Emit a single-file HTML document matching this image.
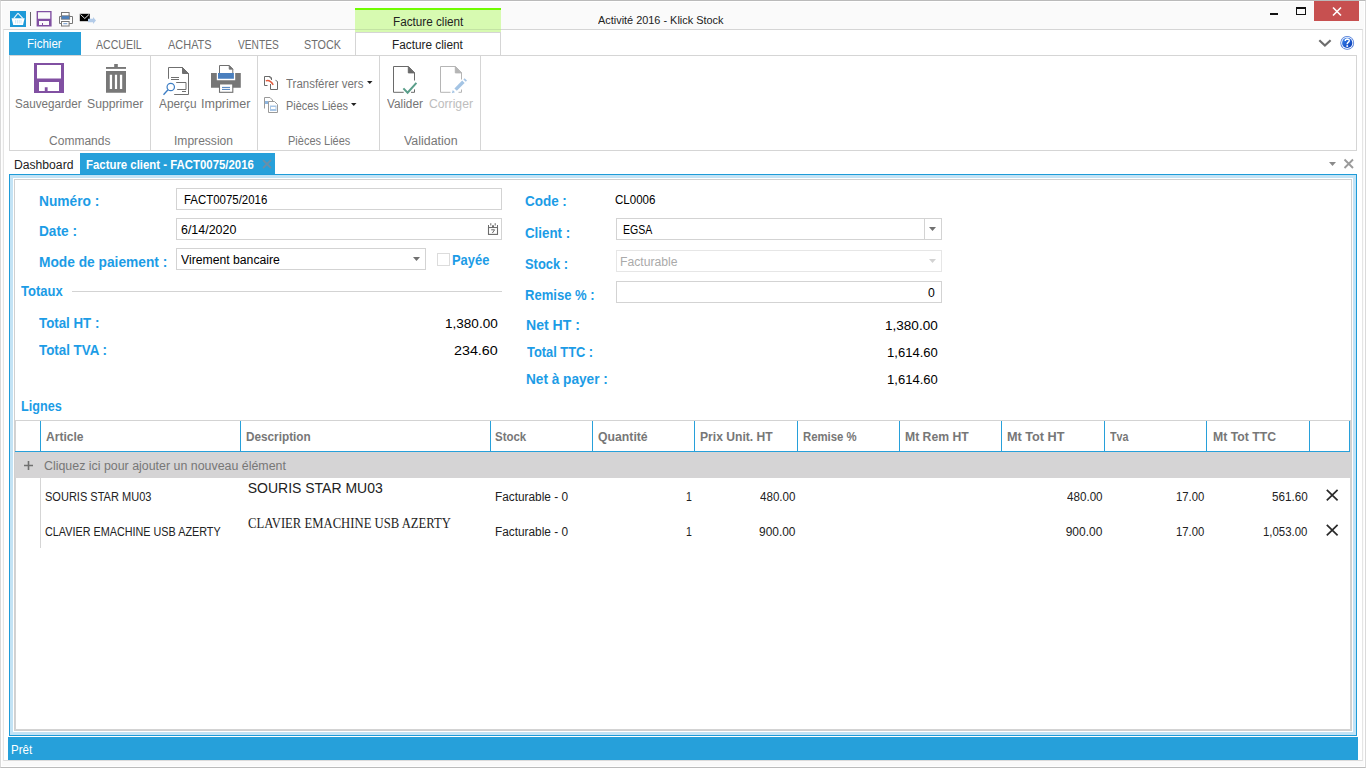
<!DOCTYPE html>
<html><head><meta charset="utf-8"><title>Klick Stock</title>
<style>
html,body{margin:0;padding:0;}
body{width:1366px;height:768px;position:relative;overflow:hidden;background:#fafafa;font-family:'Liberation Sans', sans-serif;}
.t{position:absolute;z-index:5;line-height:1;white-space:nowrap;transform-origin:0 0;}
.a{position:absolute;box-sizing:border-box;}
svg{position:absolute;overflow:visible;}
</style></head><body>
<!-- window frame -->
<div class="a" style="left:0;top:0;width:1366px;height:768px;border:1px solid #dadada;border-top-color:#bababa;border-bottom-color:#bbbbbb;"></div>
<div class="a" style="left:1px;top:1px;width:1364px;height:766px;border:1px solid #fff;"></div>
<div class="a" style="left:3px;top:29px;width:1360px;height:732px;border:1px solid #e5e5e5;border-top-color:#d5d5d5;border-bottom-color:#dcdcdc;background:#fff;"></div>
<!-- contextual header -->
<div class="a" style="left:355px;top:8px;width:146px;height:24px;background:#d7fab1;border-top:2px solid #70fb00;"></div>
<div class="a" style="left:355px;top:29px;width:146px;height:1px;background:#c3e3a3;"></div>
<!-- window buttons -->
<div class="a" style="left:1314px;top:1px;width:45px;height:20px;background:#c75050;"></div>
<svg style="left:1332px;top:7px" width="10" height="9"><path d="M1 0.5 L9 8.5 M9 0.5 L1 8.5" stroke="#fff" stroke-width="1.6"/></svg>
<div class="a" style="left:1270px;top:13px;width:8px;height:2px;background:#111;"></div>
<div class="a" style="left:1296px;top:7px;width:10px;height:8px;border:1px solid #111;border-top-width:2px;"></div>
<!-- ribbon tabs -->
<div class="a" style="left:9px;top:32px;width:72px;height:23px;background:#26a0da;"></div>
<div class="a" style="left:355px;top:32px;width:146px;height:24px;border:1px solid #d5d5d5;border-bottom:none;background:#fff;"></div>
<!-- ribbon panel -->
<div class="a" style="left:9px;top:55px;width:1348px;height:96px;border:1px solid #d5d5d5;background:#fff;"></div>
<div class="a" style="left:150px;top:56px;width:1px;height:94px;background:#d5d5d5;"></div>
<div class="a" style="left:257px;top:56px;width:1px;height:94px;background:#d5d5d5;"></div>
<div class="a" style="left:379px;top:56px;width:1px;height:94px;background:#d5d5d5;"></div>
<div class="a" style="left:480px;top:56px;width:1px;height:94px;background:#d5d5d5;"></div>
<!-- doc tab strip -->
<div class="a" style="left:80px;top:153px;width:195px;height:21px;background:#26a0da;"></div>
<!-- doc panel -->
<div class="a" style="left:9px;top:174px;width:1348px;height:562px;border:1px solid #1e9bd8;background:#c3e3f5;"></div>
<div class="a" style="left:13px;top:178px;width:1340px;height:554px;background:#fff;"></div>
<div class="a" style="left:14px;top:179px;width:1338px;height:552px;border:1px solid #d0d0d0;background:#fff;"></div>
<!-- status bar -->
<div class="a" style="left:8px;top:737px;width:1350px;height:23px;background:#26a0da;"></div>
<!-- form inputs -->
<div class="a" style="left:176px;top:188px;width:326px;height:22px;border:1px solid #d3d3d3;"></div>
<div class="a" style="left:176px;top:218px;width:326px;height:22px;border:1px solid #d3d3d3;"></div>
<div class="a" style="left:176px;top:248px;width:250px;height:22px;border:1px solid #d3d3d3;"></div>
<div class="a" style="left:437px;top:253px;width:13px;height:13px;border:1px solid #dcdcdc;"></div>
<div class="a" style="left:72px;top:291px;width:430px;height:1px;background:#d3d3d3;"></div>
<div class="a" style="left:616px;top:218px;width:326px;height:22px;border:1px solid #d3d3d3;"></div>
<div class="a" style="left:924px;top:219px;width:1px;height:20px;background:#d3d3d3;"></div>
<div class="a" style="left:616px;top:250px;width:326px;height:22px;border:1px solid #e6e6e6;"></div>
<div class="a" style="left:616px;top:281px;width:326px;height:22px;border:1px solid #d3d3d3;"></div>
<!-- grid -->
<div class="a" style="left:15px;top:420px;width:1336px;height:310px;border:1px solid #d3d3d3;"></div>
<div class="a" style="left:15px;top:451px;width:1335px;height:1px;background:#27a0da;"></div>
<div class="a" style="left:15px;top:452px;width:1335px;height:26px;background:#d5d4d5;"></div>
<div class="a" style="left:40px;top:478px;width:1px;height:70px;background:#d5d5d5;"></div>
<div class="a" style="left:40px;top:421px;width:1px;height:30px;background:#27a0da;"></div>
<div class="a" style="left:240px;top:421px;width:1px;height:30px;background:#27a0da;"></div>
<div class="a" style="left:490px;top:421px;width:1px;height:30px;background:#27a0da;"></div>
<div class="a" style="left:592px;top:421px;width:1px;height:30px;background:#27a0da;"></div>
<div class="a" style="left:694px;top:421px;width:1px;height:30px;background:#27a0da;"></div>
<div class="a" style="left:797px;top:421px;width:1px;height:30px;background:#27a0da;"></div>
<div class="a" style="left:899px;top:421px;width:1px;height:30px;background:#27a0da;"></div>
<div class="a" style="left:1001px;top:421px;width:1px;height:30px;background:#27a0da;"></div>
<div class="a" style="left:1104px;top:421px;width:1px;height:30px;background:#27a0da;"></div>
<div class="a" style="left:1206px;top:421px;width:1px;height:30px;background:#27a0da;"></div>
<div class="a" style="left:1309px;top:421px;width:1px;height:30px;background:#27a0da;"></div>
<div class="a" style="left:1349px;top:421px;width:1px;height:30px;background:#27a0da;"></div>
<!-- QAT icons -->
<svg style="left:10px;top:11px" width="16" height="16" viewBox="0 0 16 16">
 <rect width="16" height="16" fill="#1e9ad8"/>
 <path d="M3.8 7.3 L7.6 2.6 Q8 2.2 8.4 2.6 L12.8 7.3" fill="none" stroke="#e8f4fb" stroke-width="1.1"/>
 <path d="M1.6 7.3 H14.6 L13 14 H3.2 Z" fill="#fff"/>
 <path d="M5.6 9 V12.5 M7.4 9 V12.5 M9.2 9 V12.5 M11 9 V12.5" stroke="#bfe2f5" stroke-width="0.8"/>
</svg>
<div class="a" style="left:30px;top:12px;width:1px;height:14px;background:#666;"></div>
<svg style="left:36px;top:11px" width="16" height="16" viewBox="0 0 16 16">
 <path fill="#8150a2" fill-rule="evenodd" d="M0.6 0 H15.6 V15.4 H0.6 Z M2 1.3 H14.2 V7.7 H2 Z M3 10 H13 V14 H7 V12 H6 V14 H3 Z"/>
</svg>
<svg style="left:58px;top:11px" width="16" height="16" viewBox="0 0 16 16">
 <rect x="3.5" y="1.5" width="7.6" height="4" fill="#fff" stroke="#777" stroke-width="1"/>
 <path d="M1.5 5.5 H14.5 V12.5 H1.5 Z" fill="#fff" stroke="#777" stroke-width="1"/>
 <rect x="3.3" y="4.8" width="8.4" height="3.4" fill="#4a82c3" stroke="#777" stroke-width="0.8"/>
 <rect x="3.5" y="10.5" width="7.6" height="4.5" fill="#fff" stroke="#777" stroke-width="1"/>
 <path d="M5.3 12.7 H9.3" stroke="#4a82c3" stroke-width="0.8"/>
</svg>
<svg style="left:79px;top:13px" width="18" height="12" viewBox="0 0 18 12">
 <rect x="0.8" y="0.8" width="10" height="7.4" fill="#000"/>
 <path d="M1.5 1.5 L5.8 5.5 L10 1.5" fill="none" stroke="#fff" stroke-width="0.9"/>
 <path d="M9 5.7 H14 V4 L17 7.5 L14 11 V9.3 H9 Z" fill="#b3cbe8"/>
</svg>
<!-- ribbon big icons -->
<svg style="left:34px;top:63px" width="30" height="30" viewBox="0 0 30 30">
 <path fill="#8150a2" fill-rule="evenodd" d="M0 0 H30 V30 H0 Z M3 2 H27 V15.5 H3 Z M5 19 H25 V28 H13.6 V24.2 H10.8 V28 H5 Z"/>
</svg>
<svg style="left:106px;top:64px" width="20" height="29" viewBox="0 0 20 29">
 <rect x="8.2" y="0" width="3.6" height="3.2" fill="#787878"/>
 <rect x="0" y="3" width="20" height="1.9" fill="#787878"/>
 <path fill="#787878" fill-rule="evenodd" d="M0 7 H20 V28.7 H0 Z M3.8 10.8 H6.1 V25.1 H3.8 Z M8.9 10.8 H11.1 V25.1 H8.9 Z M13.9 10.8 H16.2 V25.1 H13.9 Z"/>
</svg>
<svg style="left:158px;top:60px" width="36" height="36" viewBox="0 0 36 36">
 <path d="M10.5 18.8 V7.5 H24.5 L30.5 13.5 V34.5 H16.2" fill="none" stroke="#6f6f6f" stroke-width="1"/>
 <path d="M24.5 7.5 L30.5 13.5 H24.5 Z" fill="#6f6f6f" stroke="#6f6f6f" stroke-width="1"/>
 <path d="M13 17.5 H21 M13 19.5 H21 M18.2 22.5 H28 V29.5 H19.2 M24 31.5 H28" fill="none" stroke="#6f6f6f" stroke-width="1"/>
 <circle cx="12.75" cy="27" r="3.7" fill="none" stroke="#3c7dc4" stroke-width="1.2"/>
 <path d="M10 29.8 L5.5 34.7" stroke="#3c7dc4" stroke-width="1.3"/>
</svg>
<svg style="left:208px;top:60px" width="36" height="36" viewBox="0 0 36 36">
 <path d="M11.5 13.5 V5.5 H21.2 L24.8 9.2 V13.5" fill="#fff" stroke="#707070" stroke-width="1"/>
 <path d="M21.2 5.5 L24.8 9.2 H21.2 Z" fill="#707070" stroke="#707070" stroke-width="0.8"/>
 <path fill="#777" fill-rule="evenodd" d="M3 13 H32.8 V27.8 H3 Z M8.8 13 H27.2 V20.2 H8.8 Z"/>
 <rect x="10" y="13" width="15.9" height="5.75" fill="#4a7fbe"/>
 <rect x="11.5" y="23.9" width="13.3" height="8.4" fill="#fff" stroke="#707070" stroke-width="1.1"/>
 <path d="M14 27.4 H22 M14 29.4 H22" stroke="#4a7fbe" stroke-width="1"/>
</svg>
<!-- small ribbon icons -->
<svg style="left:264px;top:76px" width="15" height="15" viewBox="0 0 15 15">
 <path d="M3.5 9.5 H0.5 V0.5 H6 L7.5 2 V4" fill="none" stroke="#6a6a6a" stroke-width="1"/>
 <path d="M6 0.5 V2 H7.5" fill="none" stroke="#6a6a6a" stroke-width="1"/>
 <path d="M6.5 8 V13.5 H13.5 V5.5 L11.5 4.3" fill="none" stroke="#6a6a6a" stroke-width="1"/>
 <path d="M1.8 4.9 Q6 3.5 9.2 8.8" fill="none" stroke="#e05a3c" stroke-width="1.5"/>
</svg>
<svg style="left:264px;top:97px" width="15" height="16" viewBox="0 0 15 16">
 <path d="M0.5 11.5 V0.5 H6 L8.5 3 V4.5" fill="#fff" stroke="#9a9a9a" stroke-width="1"/>
 <rect x="1" y="4" width="3.5" height="3" fill="#8fb6df"/>
 <path d="M4.5 15.5 V4.5 H10.5 L13.5 7.5 V15.5 Z" fill="#fff" stroke="#9a9a9a" stroke-width="1"/>
 <rect x="6" y="8.5" width="6.5" height="5.5" fill="#a8c6e6"/>
 <rect x="7" y="10" width="4.5" height="2" fill="#fff"/>
</svg>
<svg style="left:366px;top:80px" width="8" height="5"><path d="M1 1 H6.5 L3.75 4 Z" fill="#222"/></svg>
<svg style="left:350px;top:102px" width="8" height="5"><path d="M1 1 H6.5 L3.75 4 Z" fill="#222"/></svg>
<svg style="left:388px;top:62px" width="34" height="34" viewBox="0 0 34 34">
 <path d="M15.7 30.3 H5.5 V4.5 H20.3 L26.5 10.9 V18.5" fill="none" stroke="#6a6a6a" stroke-width="1"/>
 <path d="M20.3 4.5 L26.5 10.9 H20.3 Z" fill="#6a6a6a" stroke="#6a6a6a" stroke-width="1"/>
 <path d="M23 30.3 H26.5 V27.4" fill="none" stroke="#6a6a6a" stroke-width="1"/>
 <path d="M15.4 26.4 L19.6 30.75 L28.4 20.9" fill="none" stroke="#5a9e8a" stroke-width="2"/>
</svg>
<svg style="left:435px;top:62px" width="34" height="34" viewBox="0 0 34 34">
 <path d="M15.5 30.3 H5.5 V4.5 H20.3 L26.5 10.9 V17.5" fill="none" stroke="#b5b5b5" stroke-width="1"/>
 <path d="M20.3 4.5 L26.5 10.9 H20.3 Z" fill="#b5b5b5" stroke="#b5b5b5" stroke-width="1"/>
 <path d="M23.5 30.3 H26.5 V27.5" fill="none" stroke="#b5b5b5" stroke-width="1"/>
 <path d="M16.8 31.2 L17.8 28 L20 30.2 Z" fill="#a4c4e4"/>
 <path d="M20.6 27.6 L28.4 19.8" fill="none" stroke="#a4c4e4" stroke-width="3.4"/>
 <path d="M29.6 18.6 L30.8 17.4" fill="none" stroke="#a4c4e4" stroke-width="3.4"/>
</svg>
<!-- ribbon right -->
<svg style="left:1318px;top:39px" width="14" height="8"><path d="M1.3 1.3 L6.9 6.6 L12.6 1.3" fill="none" stroke="#6d6d6d" stroke-width="2.2"/></svg>
<svg style="left:1340px;top:36px" width="15" height="15" viewBox="0 0 15 15">
 <defs><linearGradient id="hg" x1="0" y1="0" x2="1" y2="1"><stop offset="0" stop-color="#3a86f0"/><stop offset="1" stop-color="#0636b0"/></linearGradient></defs>
 <circle cx="7.2" cy="6.9" r="6.9" fill="#4a78d6"/>
 <circle cx="7.2" cy="6.9" r="6.1" fill="#eef4ff"/>
 <circle cx="7.2" cy="6.9" r="5.1" fill="url(#hg)"/>
 <path d="M5.2 5.0 Q5.3 3.0 7.3 3.0 Q9.3 3.1 9.2 4.9 Q9.1 5.9 7.9 6.6 Q7.2 7.1 7.2 8.3" fill="none" stroke="#fff" stroke-width="1.5"/>
 <rect x="6.4" y="9.2" width="1.7" height="1.7" fill="#fff"/>
</svg>
<!-- doc tab strip icons -->
<svg style="left:262px;top:159px" width="10" height="10"><path d="M1 1 L9 9 M9 1 L1 9" stroke="#6a8fa8" stroke-width="1.8"/></svg>
<svg style="left:1328px;top:161px" width="9" height="6"><path d="M1 1 H8 L4.5 5 Z" fill="#8a8a8a"/></svg>
<svg style="left:1343px;top:158px" width="12" height="12"><path d="M1.5 1.5 L10 10 M10 1.5 L1.5 10" stroke="#9a9a9a" stroke-width="1.9"/></svg>
<!-- form icons -->
<svg style="left:487px;top:222px" width="12" height="14" viewBox="0 0 12 14">
 <rect x="1.5" y="5.5" width="9" height="6.9" fill="none" stroke="#6b6b6b" stroke-width="1.1"/>
 <path d="M1.5 3 V6 M10.5 3 V6 M3.8 1.2 V3.5 M8.2 1.2 V3.5" stroke="#6b6b6b" stroke-width="1"/>
 <rect x="5" y="3.3" width="2" height="2.5" fill="#6b6b6b"/>
 <path d="M4.2 7.8 H7.6 L5.4 11" fill="none" stroke="#6b6b6b" stroke-width="1"/>
</svg>
<svg style="left:412px;top:256px" width="9" height="6"><path d="M1 1 H8 L4.5 5 Z" fill="#707070"/></svg>
<svg style="left:928px;top:226px" width="9" height="6"><path d="M1 1 H8 L4.5 5 Z" fill="#707070"/></svg>
<svg style="left:928px;top:258px" width="9" height="6"><path d="M1 1 H8 L4.5 5 Z" fill="#d2d2d2"/></svg>
<!-- grid icons -->
<svg style="left:23px;top:460px" width="11" height="11"><path d="M1 5.5 H10 M5.5 1 V10" stroke="#707070" stroke-width="1.6"/></svg>
<svg style="left:1325px;top:488px" width="14" height="14"><path d="M1.8 1.8 L12.6 12.4 M12.6 1.8 L1.8 12.4" stroke="#2a2a2a" stroke-width="1.7"/></svg>
<svg style="left:1325px;top:523px" width="14" height="14"><path d="M1.8 1.8 L12.6 12.4 M12.6 1.8 L1.8 12.4" stroke="#2a2a2a" stroke-width="1.7"/></svg>

<div class="t" style="left:598.00px;top:15.0px;font-size:11px;color:#222;transform:scaleX(0.9913);">Activité 2016 - Klick Stock</div>
<div class="t" style="left:392.92px;top:16.0px;font-size:12px;color:#222;transform:scaleX(0.9761);">Facture client</div>
<div class="t" style="left:27.24px;top:38.0px;font-size:12px;color:#fff;transform:scaleX(0.9629);">Fichier</div>
<div class="t" style="left:96.10px;top:39.0px;font-size:12px;color:#6e6e6e;transform:scaleX(0.8788);">ACCUEIL</div>
<div class="t" style="left:168.40px;top:39.0px;font-size:12px;color:#6e6e6e;transform:scaleX(0.9128);">ACHATS</div>
<div class="t" style="left:238.20px;top:39.0px;font-size:12px;color:#6e6e6e;transform:scaleX(0.8479);">VENTES</div>
<div class="t" style="left:304.20px;top:39.0px;font-size:12px;color:#6e6e6e;transform:scaleX(0.9000);">STOCK</div>
<div class="t" style="left:392.22px;top:39.0px;font-size:12px;color:#222;transform:scaleX(0.9831);">Facture client</div>
<div class="t" style="left:15.03px;top:98.0px;font-size:12px;color:#747474;transform:scaleX(0.9706);">Sauvegarder</div>
<div class="t" style="left:87.28px;top:98.0px;font-size:12px;color:#747474;transform:scaleX(1.0167);">Supprimer</div>
<div class="t" style="left:158.50px;top:98.0px;font-size:12px;color:#747474;transform:scaleX(0.9865);">Aperçu</div>
<div class="t" style="left:200.96px;top:98.0px;font-size:12px;color:#747474;transform:scaleX(1.0435);">Imprimer</div>
<div class="t" style="left:286.25px;top:78.0px;font-size:12px;color:#747474;transform:scaleX(0.9562);">Transférer vers</div>
<div class="t" style="left:286.09px;top:100.0px;font-size:12px;color:#747474;transform:scaleX(0.9104);">Pièces Liées</div>
<div class="t" style="left:387.40px;top:98.0px;font-size:12px;color:#747474;transform:scaleX(0.9838);">Valider</div>
<div class="t" style="left:429.29px;top:98.0px;font-size:12px;color:#bdbdbd;transform:scaleX(1.0143);">Corriger</div>
<div class="t" style="left:49.10px;top:135.0px;font-size:12px;color:#777;">Commands</div>
<div class="t" style="left:174.39px;top:135.0px;font-size:12px;color:#777;transform:scaleX(1.0053);">Impression</div>
<div class="t" style="left:287.68px;top:135.0px;font-size:12px;color:#777;transform:scaleX(0.9164);">Pièces Liées</div>
<div class="t" style="left:404.30px;top:135.0px;font-size:12px;color:#777;transform:scaleX(1.0333);">Validation</div>
<div class="t" style="left:14.39px;top:159.0px;font-size:12px;color:#222;transform:scaleX(1.0123);">Dashboard</div>
<div class="t" style="left:85.85px;top:159.0px;font-size:12px;color:#fff;font-weight:700;transform:scaleX(0.9497);">Facture client - FACT0075/2016</div>
<div class="t" style="left:10.94px;top:744.0px;font-size:12px;color:#fff;transform:scaleX(0.9619);">Prêt</div>
<div class="t" style="left:38.95px;top:194.0px;font-size:14.5px;color:#1c9ce6;font-weight:700;transform:scaleX(0.9475);">Numéro :</div>
<div class="t" style="left:38.96px;top:224.0px;font-size:14.5px;color:#1c9ce6;font-weight:700;transform:scaleX(0.9421);">Date :</div>
<div class="t" style="left:38.95px;top:255.0px;font-size:14.5px;color:#1c9ce6;font-weight:700;transform:scaleX(0.9481);">Mode de paiement :</div>
<div class="t" style="left:452.31px;top:253.0px;font-size:14.5px;color:#1c9ce6;font-weight:700;transform:scaleX(0.8902);">Payée</div>
<div class="t" style="left:21.40px;top:284.0px;font-size:14.5px;color:#1c9ce6;font-weight:700;transform:scaleX(0.8978);">Totaux</div>
<div class="t" style="left:525.27px;top:194.0px;font-size:14.5px;color:#1c9ce6;font-weight:700;transform:scaleX(0.9279);">Code :</div>
<div class="t" style="left:525.28px;top:226.0px;font-size:14.5px;color:#1c9ce6;font-weight:700;transform:scaleX(0.9191);">Client :</div>
<div class="t" style="left:525.31px;top:257.0px;font-size:14.5px;color:#1c9ce6;font-weight:700;transform:scaleX(0.8891);">Stock :</div>
<div class="t" style="left:525.30px;top:288.0px;font-size:14.5px;color:#1c9ce6;font-weight:700;transform:scaleX(0.9000);">Remise % :</div>
<div class="t" style="left:38.90px;top:316.0px;font-size:14.5px;color:#1c9ce6;font-weight:700;transform:scaleX(0.9169);">Total HT :</div>
<div class="t" style="left:38.90px;top:343.0px;font-size:14.5px;color:#1c9ce6;font-weight:700;transform:scaleX(0.9205);">Total TVA :</div>
<div class="t" style="left:525.63px;top:318.0px;font-size:14.5px;color:#1c9ce6;font-weight:700;transform:scaleX(0.9698);">Net HT :</div>
<div class="t" style="left:526.60px;top:345.0px;font-size:14.5px;color:#1c9ce6;font-weight:700;transform:scaleX(0.8863);">Total TTC :</div>
<div class="t" style="left:525.66px;top:372.0px;font-size:14.5px;color:#1c9ce6;font-weight:700;transform:scaleX(0.9400);">Net à payer :</div>
<div class="t" style="left:20.93px;top:399.0px;font-size:14.5px;color:#1c9ce6;font-weight:700;transform:scaleX(0.8711);">Lignes</div>
<div class="t" style="left:183.95px;top:194.0px;font-size:12px;color:#000;transform:scaleX(0.9535);">FACT0075/2016</div>
<div class="t" style="left:181.16px;top:224.0px;font-size:12px;color:#000;transform:scaleX(1.0365);">6/14/2020</div>
<div class="t" style="left:181.30px;top:254.0px;font-size:12px;color:#000;transform:scaleX(1.0175);">Virement bancaire</div>
<div class="t" style="left:615.24px;top:194.0px;font-size:12px;color:#000;transform:scaleX(0.9610);">CL0006</div>
<div class="t" style="left:622.72px;top:224.0px;font-size:12px;color:#000;transform:scaleX(0.8812);">EGSA</div>
<div class="t" style="left:620.29px;top:256.0px;font-size:12px;color:#aaa;transform:scaleX(1.0145);">Facturable</div>
<div class="t" style="left:927.50px;top:287.0px;font-size:12px;color:#000;transform:scaleX(1.0167);">0</div>
<div class="t" style="left:444.57px;top:318.0px;font-size:12px;color:#000;transform:scaleX(1.1289);">1,380.00</div>
<div class="t" style="left:453.61px;top:345.0px;font-size:12px;color:#000;transform:scaleX(1.1914);">234.60</div>
<div class="t" style="left:884.57px;top:320.0px;font-size:12px;color:#000;transform:scaleX(1.1289);">1,380.00</div>
<div class="t" style="left:886.51px;top:347.0px;font-size:12px;color:#000;transform:scaleX(1.0867);">1,614.60</div>
<div class="t" style="left:886.51px;top:374.0px;font-size:12px;color:#000;transform:scaleX(1.0867);">1,614.60</div>
<div class="t" style="left:45.90px;top:431.0px;font-size:12px;color:#777;font-weight:700;transform:scaleX(1.0054);">Article</div>
<div class="t" style="left:245.62px;top:431.0px;font-size:12px;color:#777;font-weight:700;transform:scaleX(0.9800);">Description</div>
<div class="t" style="left:495.24px;top:431.0px;font-size:12px;color:#777;font-weight:700;transform:scaleX(0.9562);">Stock</div>
<div class="t" style="left:598.20px;top:431.0px;font-size:12px;color:#777;font-weight:700;transform:scaleX(1.0208);">Quantité</div>
<div class="t" style="left:700.49px;top:431.0px;font-size:12px;color:#777;font-weight:700;transform:scaleX(1.0099);">Prix Unit. HT</div>
<div class="t" style="left:802.75px;top:431.0px;font-size:12px;color:#777;font-weight:700;transform:scaleX(0.9464);">Remise %</div>
<div class="t" style="left:904.68px;top:431.0px;font-size:12px;color:#777;font-weight:700;transform:scaleX(1.0161);">Mt Rem HT</div>
<div class="t" style="left:1007.44px;top:431.0px;font-size:12px;color:#777;font-weight:700;transform:scaleX(1.0566);">Mt Tot HT</div>
<div class="t" style="left:1110.20px;top:431.0px;font-size:12px;color:#777;font-weight:700;transform:scaleX(0.8952);">Tva</div>
<div class="t" style="left:1212.68px;top:431.0px;font-size:12px;color:#777;font-weight:700;transform:scaleX(1.0200);">Mt Tot TTC</div>
<div class="t" style="left:44.27px;top:460.0px;font-size:12px;color:#777;transform:scaleX(1.0330);">Cliquez ici pour ajouter un nouveau élément</div>
<div class="t" style="left:45.08px;top:491.0px;font-size:12px;color:#222;transform:scaleX(0.9191);">SOURIS STAR MU03</div>
<div class="t" style="left:247.70px;top:481.0px;font-size:14px;color:#222;">SOURIS STAR MU03</div>
<div class="t" style="left:495.41px;top:491.0px;font-size:12px;color:#222;transform:scaleX(0.9863);">Facturable - 0</div>
<div class="t" style="left:685.72px;top:491.0px;font-size:12px;color:#222;transform:scaleX(0.8800);">1</div>
<div class="t" style="left:760.00px;top:491.0px;font-size:12px;color:#222;transform:scaleX(0.9667);">480.00</div>
<div class="t" style="left:1066.70px;top:491.0px;font-size:12px;color:#222;transform:scaleX(0.9694);">480.00</div>
<div class="t" style="left:1175.56px;top:491.0px;font-size:12px;color:#222;transform:scaleX(0.9414);">17.00</div>
<div class="t" style="left:1271.53px;top:491.0px;font-size:12px;color:#222;transform:scaleX(0.9743);">561.60</div>
<div class="t" style="left:45.10px;top:526.0px;font-size:12px;color:#222;transform:scaleX(0.9010);">CLAVIER EMACHINE USB AZERTY</div>
<div class="t" style="left:247.85px;top:516.0px;font-size:15px;color:#222;font-family:'Liberation Serif', serif;transform:scaleX(0.8452);">CLAVIER EMACHINE USB AZERTY</div>
<div class="t" style="left:495.41px;top:526.0px;font-size:12px;color:#222;transform:scaleX(0.9863);">Facturable - 0</div>
<div class="t" style="left:685.72px;top:526.0px;font-size:12px;color:#222;transform:scaleX(0.8800);">1</div>
<div class="t" style="left:759.01px;top:526.0px;font-size:12px;color:#222;transform:scaleX(0.9943);">900.00</div>
<div class="t" style="left:1065.70px;top:526.0px;font-size:12px;color:#222;">900.00</div>
<div class="t" style="left:1175.56px;top:526.0px;font-size:12px;color:#222;transform:scaleX(0.9414);">17.00</div>
<div class="t" style="left:1262.85px;top:526.0px;font-size:12px;color:#222;transform:scaleX(0.9511);">1,053.00</div>
</body></html>
